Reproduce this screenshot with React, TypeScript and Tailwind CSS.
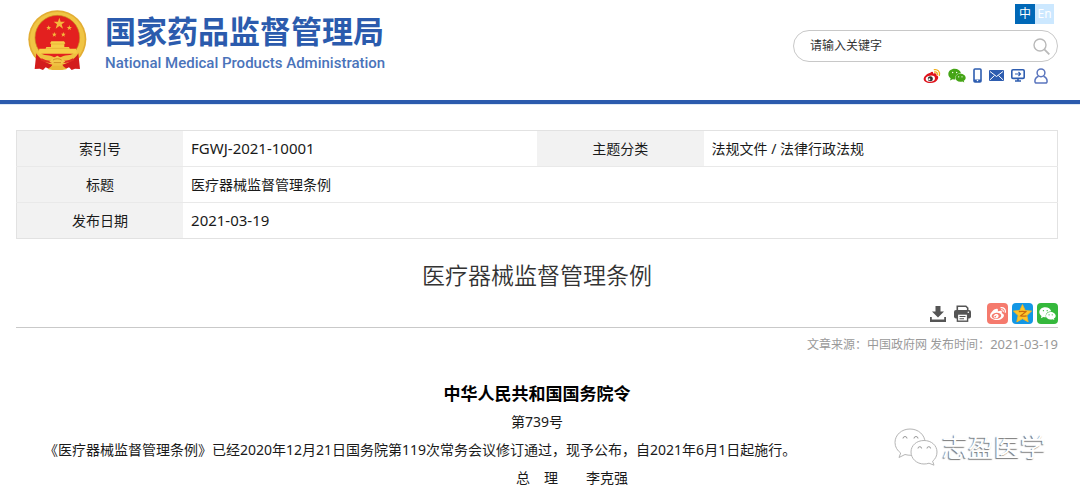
import type { ReactNode } from "react";
import { FaWeibo } from "react-icons/fa";

function Emblem() {
  return (
    <svg viewBox="20 25 186 186" className="h-[62px] w-[62px] shrink-0" role="img" aria-label="国徽">
      <circle cx="111" cy="116" r="87" fill="#e3ad33" />
      <circle cx="111" cy="116" r="82" fill="#f0c544" />
      <circle cx="111" cy="111" r="67" fill="#e3201f" stroke="#c58d1d" strokeWidth="2" />
      <g fill="#f5b83c">
        <path d="M117 51l4 12h13l-10 8 4 13-11-8-11 8 4-13-10-8h13z" />
        <path d="M85 74l2 5h5l-4 4 1 5-4-3-5 3 2-5-4-4h5z" />
        <path d="M147 73l2 6h6l-5 4 2 5-5-3-5 3 2-5-5-4h6z" />
        <path d="M102 94l2 5h5l-4 4 1 5-4-3-5 3 2-5-4-4h5z" />
        <path d="M129 94l2 5h5l-4 4 1 5-4-3-5 3 2-5-4-4h5z" />
      </g>
      <path d="M93 122h38l4 6-3 2v9h14l2 5h19l3 15H54l3-15h19l2-5h14v-9l-3-2z" fill="#f6cd47" />
      <path d="M92 130h40M78 143h68" stroke="#dc9c2b" strokeWidth="1.500" />
      <path d="M45 152c12 12 32 10 48 14l18 8 18-8c16-4 36-2 48-14l2 10c-14 24-36 38-68 38s-54-14-68-38z" fill="#efc140" />
      <path d="M48 158l-5 47 15-1 10 4 8-8 12 6 8-14c-20-4-37-16-48-34z" fill="#d31c1c" />
      <path d="M174 158l5 47-15-1-10 4-8-8-12 6-8-14c20-4 37-16 48-34z" fill="#d31c1c" />
      <path d="M62 176c15 9 29 9 42 5M160 176c-15 9-29 9-42 5" stroke="#e02a22" strokeWidth="7" fill="none" />
      <path d="M95 174l16-9 16 9 8 9-14 7H101l-14-7z" fill="#f3c84a" />
      <path d="M98 178c6-5 20-5 26 0M100 186h22" stroke="#c8811b" strokeWidth="2.500" fill="none" />
      <path d="M82 205l14-10h30l14 10-14 3H96z" fill="#eab736" />
    </svg>
  );
}

function WeiboColor() {
  return (
    <svg viewBox="0 0 54 48" className="h-4 w-[18px]">
      <path d="M22 14c5-5 10-3 8 3 7-3 12-1 10 5 5 1 7 5 5 10-3 8-12 13-23 13C10 45 2 40 2 33c0-7 9-16 20-19z" fill="#e0121b" />
      <ellipse cx="22" cy="32" rx="14" ry="9" fill="#fff" transform="rotate(-8 22 32)" />
      <circle cx="22" cy="32" r="7.500" fill="#333" />
      <circle cx="19" cy="34" r="3" fill="#fff" />
      <path d="M34 5c10-2 18 6 15 17M35 12c5-1 9 3 8 8" stroke="#f3b01c" strokeWidth="4" strokeLinecap="round" fill="none" />
    </svg>
  );
}

function WechatBubbles({ body, eye, className }: { body: string; eye: string; className: string }) {
  return (
    <svg viewBox="0 0 54 44" className={className}>
      <path d="M20 2C9 2 1 9 1 18c0 5 3 9 7 12l-2 7 8-4c3 1 6 1 8 1-3-10 5-19 17-19C37 7 29 2 20 2z" fill={body} />
      <path d="M37 17c-9 0-15 6-15 12s6 12 15 12c2 0 4 0 6-1l6 3-2-5c4-2 6-5 6-9 0-6-7-12-16-12z" fill={body} />
      <circle cx="14" cy="13" r="2" fill={eye} />
      <circle cx="26" cy="13" r="2" fill={eye} />
      <circle cx="32" cy="26" r="2" fill={eye} />
      <circle cx="42" cy="26" r="2" fill={eye} />
    </svg>
  );
}

function PhoneIcon() {
  return (
    <svg viewBox="0 0 9 15" className="h-[15px] w-[9px]">
      <rect x="1" y="1" width="7" height="13" rx="1" fill="none" stroke="#2e5db0" strokeWidth="1.600" />
      <path d="M1 11.500h7V14H1z" fill="#2e5db0" />
      <circle cx="4.500" cy="12.500" r=".8" fill="#fff" />
    </svg>
  );
}

function MailIcon() {
  return (
    <svg viewBox="0 0 15 11" className="h-[11px] w-[15px]">
      <rect width="15" height="11" rx="1" fill="#2e5db0" />
      <path d="M1 1.500l6.500 5 6.500-5M1 9.800l4.500-4.300M14 9.800L9.500 5.500" fill="none" stroke="#fff" strokeWidth="1" />
    </svg>
  );
}

function MonitorIcon() {
  return (
    <svg viewBox="0 0 14 13" className="h-[13px] w-[14px]" fill="none" stroke="#2e5db0">
      <rect x=".8" y=".8" width="12.400" height="8.600" rx="1.200" strokeWidth="1.600" />
      <path d="M4 5h5M7.500 3l2 2-2 2" strokeWidth="1.100" />
      <path d="M7 9.500V12M4 12h6" strokeWidth="1.600" />
    </svg>
  );
}

function UserIcon() {
  return (
    <svg viewBox="0 0 14 16" className="ml-0.5 h-4 w-[14px]" fill="none" stroke="#5b76be" strokeWidth="1.500">
      <circle cx="7" cy="4.800" r="3.900" />
      <path d="M4.500 8.300C2.300 9.200.9 11 .9 13.300c0 1.200.6 1.800 1.700 1.800h8.800c1.100 0 1.700-.6 1.700-1.800 0-2.300-1.400-4.100-3.600-5" />
    </svg>
  );
}

function DownloadIcon() {
  return (
    <svg viewBox="0 0 16 16" className="h-4 w-4" fill="#555">
      <path d="M5.500 0h5v5.500H14L8 11.500 2 5.500h3.500z" />
      <path d="M0 11h1.800v2.400h12.400V11H16v5H0z" />
    </svg>
  );
}

function PrintIcon() {
  return (
    <svg viewBox="0 0 17 17" className="h-[17px] w-[17px]">
      <path d="M3.300 5V1.200h8.600l1.800 1.800v2" fill="none" stroke="#555" strokeWidth="1.600" />
      <rect y="5" width="17" height="8.500" rx="2" fill="#555" />
      <circle cx="14.300" cy="7.300" r=".8" fill="#fff" />
      <rect x="3.400" y="9" width="10.200" height="7.200" fill="#fff" stroke="#555" strokeWidth="1.400" />
      <path d="M5.500 11.500h6M5.500 13.700h4.500" stroke="#555" strokeWidth="1.100" />
    </svg>
  );
}

function StarIcon() {
  return (
    <svg viewBox="0 0 21 21" className="h-[21px] w-[21px]">
      <path d="M10.500 1.500l2.700 5.900 6.400.7-4.700 4.400 1.300 6.400-5.700-3.200-5.700 3.200 1.300-6.400L1.400 8.100l6.400-.7z" fill="#fdc62b" stroke="#f7b51d" strokeWidth=".8" strokeLinejoin="round" />
      <path d="M6.800 8.700c2.500-.5 4.700-.5 7 0l-5.200 4.200c2.200.4 4 .3 6-.1" fill="none" stroke="#c9690b" strokeWidth="1.200" />
    </svg>
  );
}

function Num({ children }: { children: ReactNode }) {
  return <span className="text-[15px]">{children}</span>;
}

function HeadCell({ children }: { children: ReactNode }) {
  return (
    <th scope="row" className="w-[16%] bg-[#f2f2f2] p-0 text-center font-normal">
      {children}
    </th>
  );
}

const quickLinks = [
  { label: "微博", icon: <WeiboColor /> },
  { label: "微信", icon: <WechatBubbles body="#45a516" eye="#fff" className="h-[15px] w-[18px]" /> },
  { label: "手机", icon: <PhoneIcon /> },
  { label: "邮箱", icon: <MailIcon /> },
  { label: "客户端", icon: <MonitorIcon /> },
  { label: "个人中心", icon: <UserIcon /> },
];

export default function App() {
  return (
    <div className="relative bg-white font-['Noto_Sans','Noto_Sans_CJK_SC',sans-serif] text-sm text-[#1a1a1a]">
      <header className="flex items-start justify-between border-b-4 border-[#2b5bad] pr-[22px] pb-4 shadow-[0_1px_0_#dfe9f4]">
        <a href="#" className="flex items-start gap-4 pt-[9px] pl-[27px] text-[#2b5bad]">
          <Emblem />
          <span className="flex flex-col gap-1 pt-1">
            <span className="text-[31px] leading-9 font-bold">国家药品监督管理局</span>
            <span className="font-[Roboto,sans-serif] text-[15px] leading-5 font-medium text-[#4a73ba]">
              National Medical Products Administration
            </span>
          </span>
        </a>
        <div className="flex w-[265px] flex-col items-end pt-1">
          <nav className="mr-1 flex text-xs leading-5">
            <a href="#" className="w-5 bg-[#0068b7] text-center text-white">中</a>
            <a href="#" className="w-[19px] bg-[#cce8ff] text-center text-white">En</a>
          </nav>
          <form className="mt-1.5 flex h-8 w-full items-center rounded-full border border-[#c8c8c8] pr-[7px] pl-4" onSubmit={(e) => e.preventDefault()}>
            <input
              type="text"
              aria-label="搜索"
              placeholder="请输入关键字"
              className="min-w-0 flex-1 bg-transparent text-xs text-[#333] outline-none placeholder:text-[#333] placeholder:opacity-100"
            />
            <button type="submit" aria-label="提交搜索">
              <svg viewBox="0 0 17 17" className="h-[17px] w-[17px]" fill="none" stroke="#b9b9b9" strokeWidth="1.400">
                <circle cx="7" cy="7" r="6" />
                <path d="M11.300 11.300l5 5" strokeWidth="1.800" />
              </svg>
            </button>
          </form>
          <nav className="mt-[5px] mr-2.5 flex h-[17px] items-center gap-[7px]">
            {quickLinks.map((l) => (
              <a key={l.label} href="#" aria-label={l.label}>{l.icon}</a>
            ))}
          </nav>
        </div>
      </header>

      <main className="pt-[26px] pr-[22px] pb-1 pl-4">
        <table className="w-full table-fixed border-collapse border border-[#e2e2e2]">
          <tbody>
            <tr className="h-9 border-b border-[#e9e9e9]">
              <HeadCell>索引号</HeadCell>
              <td className="w-[34%] px-2"><Num>FGWJ-2021-10001</Num></td>
              <HeadCell>主题分类</HeadCell>
              <td className="w-[34%] px-2">法规文件 / 法律行政法规</td>
            </tr>
            <tr className="h-9 border-b border-[#e9e9e9]">
              <HeadCell>标题</HeadCell>
              <td colSpan={3} className="px-2">医疗器械监督管理条例</td>
            </tr>
            <tr className="h-9">
              <HeadCell>发布日期</HeadCell>
              <td colSpan={3} className="px-2"><Num>2021-03-19</Num></td>
            </tr>
          </tbody>
        </table>

        <h1 className="mt-5 text-center text-[23px] leading-8 font-[350] text-[#333]">医疗器械监督管理条例</h1>

        <div className="mt-3 flex items-center justify-end gap-1 border-b border-[#c9c9c9] pb-[3px]">
          <button type="button" aria-label="下载" className="mr-1"><DownloadIcon /></button>
          <button type="button" aria-label="打印" className="mr-3"><PrintIcon /></button>
          <a href="#" aria-label="分享到微博" className="flex h-[21px] w-[21px] items-center justify-center rounded-sm bg-[#f57a6d]">
            <FaWeibo className="h-4 w-4 text-white" />
          </a>
          <a href="#" aria-label="分享到QQ空间" className="flex h-[21px] w-[21px] items-center justify-center rounded-sm bg-[#1397e5]">
            <StarIcon />
          </a>
          <a href="#" aria-label="分享到微信" className="flex h-[21px] w-[21px] items-center justify-center rounded-sm bg-[#35b83c]">
            <WechatBubbles body="#fff" eye="#35b83c" className="h-[15px] w-[17px]" />
          </a>
        </div>
        <p className="mt-1.5 text-right text-xs leading-5 text-[#999]">
          文章来源：中国政府网 发布时间：<span className="text-[13px]">2021-03-19</span>
        </p>

        <article className="mt-[25px] leading-7">
          <h2 className="text-center text-[17px] font-bold text-black">中华人民共和国国务院令</h2>
          <p className="text-center">第739号</p>
          <p className="indent-7">
            《医疗器械监督管理条例》已经2020年12月21日国务院第119次常务会议修订通过，现予公布，自2021年6月1日起施行。
          </p>
          <p className="indent-[70px] text-center">总　理　　李克强</p>
        </article>
      </main>

      <div className="absolute right-[34px] bottom-[30px] flex items-center gap-1">
        <svg viewBox="0 0 44 38" className="h-[38px] w-11" fill="#fff" stroke="#b5b5b5" strokeWidth="1">
          <path d="M16 1C7.500 1 1 7 1 14.500c0 4.500 2.300 8 5.700 10.500L5 29.500l6-3c2 .6 4 .8 6.500.8C25 27 31 21.500 31 14.500 31 7 24.500 1 16 1z" />
          <path d="M30 12.500c-7.500 0-13 5-13 11.500s5.500 12 13 12c1.800 0 3.500-.3 5-.8l5 2-1.400-4c2.800-2.200 4.400-5.300 4.400-9.200 0-6.500-5.500-11.500-13-11.500z" />
          <path d="M9 10.500a2 2 0 0 1 4 0M20 10.500a2 2 0 0 1 4 0M24 20.500a1.800 1.800 0 0 1 3.600 0M33 20.500a1.800 1.800 0 0 1 3.600 0" fill="none" stroke="#999" />
        </svg>
        <span className="text-[26px] leading-9 text-white [text-shadow:-1px_1px_1px_#777]">志盈医学</span>
      </div>
    </div>
  );
}
